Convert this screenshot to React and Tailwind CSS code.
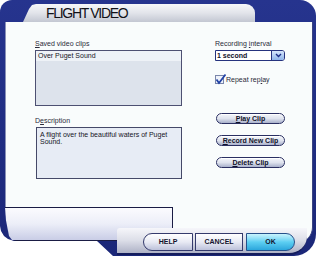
import React from 'react';

const SideButton = ({ first, rest }) => (
  <button className="h-[11px] w-[69px] rounded-full border border-[#2a2f62] bg-gradient-to-b from-[#f4f6fb] via-[#dfe3ee] to-[#a9b1cb] text-[7px] font-bold leading-[9px] text-[#10122a] shadow-[inset_0_1px_0_#ffffff]">
    <span className="underline">{first}</span>{rest}
  </button>
);

const App = () => {
  return (
    <div className="relative w-[320px] h-[258px] bg-white overflow-hidden font-['Liberation_Sans',sans-serif]">
      {/* Frame */}
      <div className="w-[316px] h-[256px] flex flex-col bg-gradient-to-b from-[#26348e] to-[#1b2778] rounded-tl-[12px] rounded-tr-[16px] rounded-br-[22px] [clip-path:polygon(0_0,100%_0,100%_100%,113px_100%,97px_241px,14px_241px,8px_239px,4px_236px,1px_231px,0_226px)]">
        {/* Title bar */}
        <div className="h-[22px] flex items-end pl-[23px]">
          <div className="w-[232px] h-[18px] rounded-tr-[9px] bg-gradient-to-b from-[#f6f7f9] via-[#e2e4ea] to-[#c3c7d2] [clip-path:polygon(0_100%,6px_5px,9px_1px,13px_0,100%_0,100%_100%)]">
            <div className="pl-[23px] text-[14px] leading-[18px] tracking-[-1.3px] text-[#111118]">FLIGHT VIDEO</div>
          </div>
        </div>

        {/* Panel */}
        <div className="flex-1 flex flex-col pl-[5px] pr-[3px]">
          <div className="h-[185px] bg-[#f9fcfc] border-l border-[#8a92b8] border-r border-r-[#3a4480] flex">
            {/* Left column */}
            <div className="ml-[29px] w-[147px] pt-[17px] flex flex-col">
              <div className="text-[7px] leading-[9px] text-[#2a2a3a]"><span className="underline">S</span>aved video clips</div>
              <div className="mt-[2px] h-[56px] border border-[#4d5072] bg-[#dde3ec]">
                <div className="h-[10px] bg-[#eef2f7] pl-[2px] text-[7px] leading-[10px] text-[#15151f]">Over Puget Sound</div>
              </div>
              <div className="mt-[10px] text-[7px] leading-[9px] text-[#2a2a3a]">D<span className="underline">e</span>scription</div>
              <div className="mt-[2px] ml-[1px] h-[52px] border border-[#454968] bg-[#e7ecf5] px-[3px] pt-[3px] text-[7px] leading-[7px] text-[#15151f]">
                A flight over the beautiful waters of Puget Sound.
              </div>
            </div>

            {/* Right column */}
            <div className="ml-[33px] w-[70px] pt-[17px] flex flex-col">
              <div className="text-[7px] leading-[9px] text-[#2a2a3a]">Recording <span className="underline">i</span>nterval</div>
              <div className="mt-[2px] h-[11px] flex border border-[#26337e] bg-white rounded-r-[3px]">
                <div className="flex-1 pl-[1px] text-[7px] font-bold leading-[9px] text-[#10122a]">1 second</div>
                <div className="w-[13px] flex items-center justify-center border-l border-[#26337e] bg-gradient-to-b from-[#d6e6fb] to-[#8fb4ea] rounded-r-[2px]">
                  <svg width="7" height="5" viewBox="0 0 7 5">
                    <path d="M1 1 L3.5 3.5 L6 1" fill="none" stroke="#1a2c86" strokeWidth="1.4" />
                  </svg>
                </div>
              </div>
              <div className="mt-[14px] flex items-center gap-[2px]">
                <div className="relative w-[9px] h-[9px] border border-[#7a86aa] bg-[#eef2fa]">
                  <svg className="absolute -left-[1px] -top-[3px]" width="12" height="12" viewBox="0 0 12 12">
                    <path d="M1.5 6.5 L4 10 L10.5 1.5" fill="none" stroke="#2344a6" strokeWidth="1.8" />
                  </svg>
                </div>
                <div className="text-[7px] leading-[9px] text-[#2a2a3a]">Repeat rep<span className="underline">l</span>ay</div>
              </div>
              <div className="mt-[29px] flex flex-col gap-[11px] pl-[1px]">
                <SideButton first="P" rest="lay Clip" />
                <SideButton first="R" rest="ecord New Clip" />
                <SideButton first="D" rest="elete Clip" />
              </div>
            </div>
          </div>

          {/* Lower strip */}
          <div className="h-[36px] flex">
            <div className="w-[168px] h-[34px] border-t border-b border-[#1a1c44] bg-gradient-to-b from-[#fbfbfe] via-[#eceef8] to-[#c9cde6] [clip-path:polygon(0_0,100%_0,100%_100%,11px_100%,7px_97%,4px_85%,1px_40%)]">
              <div className="ml-auto w-px h-[21px] bg-[#1a1c44]" />
            </div>
            <div className="flex-1 h-full bg-[#f9fcfc] rounded-br-[16px] border-r border-[#3a4480]" />
          </div>
        </div>
      </div>

      {/* Footer buttons */}
      <div className="absolute left-[117px] top-[228px] w-[190px] h-[27px] rounded-tl-[3px] rounded-br-[18px] bg-gradient-to-b from-[#f6f6fa] via-[#dcdee8] to-[#aeb2c6] border-b-2 border-[#141c5c] pl-[26px] pt-[5px]">
        <div className="flex h-[18px] text-[7px] font-bold text-[#14142e]">
          <button className="w-[50px] h-full rounded-l-full border border-[#343a6c] bg-gradient-to-b from-[#ffffff] via-[#e8eaf4] to-[#bcc1da]">HELP</button>
          <button className="ml-[2px] w-[48px] h-full border border-[#343a6c] bg-gradient-to-b from-[#ffffff] via-[#e8eaf4] to-[#bcc1da]">CANCEL</button>
          <button className="ml-[3px] w-[49px] h-full rounded-r-full border border-[#26508a] bg-gradient-to-b from-[#c8f4fd] via-[#5ccff2] to-[#2aa6dc]">OK</button>
        </div>
      </div>
    </div>
  );
};

export default App;
